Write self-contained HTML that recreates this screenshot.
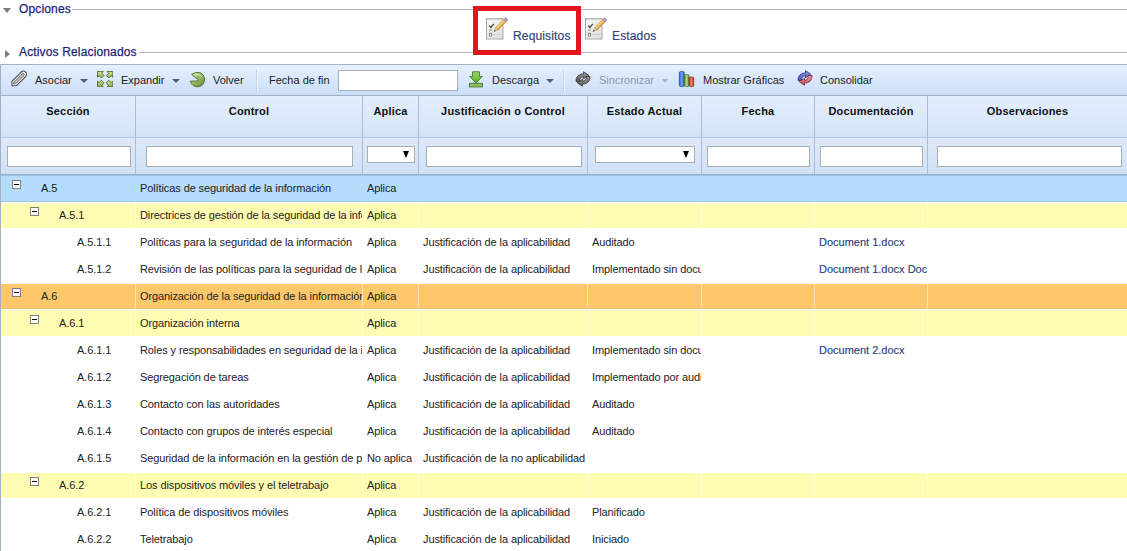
<!DOCTYPE html>
<html><head><meta charset="utf-8">
<style>
*{margin:0;padding:0;box-sizing:border-box}
html,body{width:1127px;height:551px;overflow:hidden;background:#fff;font-family:"Liberation Sans",sans-serif;position:relative}
.abs{position:absolute}
.leg{position:absolute;left:19px;font-size:12px;color:#1c1f76;white-space:nowrap;line-height:14px;letter-spacing:0.15px;-webkit-text-stroke:0.25px #1c1f76}
.hline{position:absolute;height:1px;background:#b5b8c8;right:0}
.tri{position:absolute;width:0;height:0}
.tab{position:absolute;font-size:12px;color:#34447a;line-height:14px;letter-spacing:0.15px;-webkit-text-stroke:0.2px #34447a}
.tb{position:absolute;left:0;top:64px;width:1127px;height:32px;border:1px solid #a3b1c4;border-right:none;background:linear-gradient(#e6f0fd,#cbdff9)}
.tt{position:absolute;top:74px;font-size:11px;color:#222;white-space:nowrap;line-height:13px}
.arr{position:absolute;top:79px;width:0;height:0;border-left:3.5px solid transparent;border-right:3.5px solid transparent;border-top:4px solid #4f5f74}
.sep{position:absolute;top:70px;width:2px;height:21px;background:#c5d3e6;border-right:1px solid #f2f6fb}
.hdr{position:absolute;left:0;top:96px;width:1127px;height:78px;background:linear-gradient(#e3eefc 0px,#d4e4f8 41px,#deeafa 42px,#d0e1f6 78px);border-left:1px solid #a3b1c4}
.hc{position:absolute;top:0;height:42px;font-size:11px;font-weight:bold;color:#111;text-align:center;line-height:13px;padding-top:9px;border-right:1px solid #aabdd4;border-bottom:1px solid #b3c6de;letter-spacing:0.2px}
.fc{position:absolute;top:42px;height:36px;border-right:1px solid #aabdd4}
.inp{position:absolute;top:146px;height:21px;background:#fff;border:1px solid #a9adb4}
.sel{position:absolute;top:146px;height:17px;background:#fff;border:1px solid #a9adb4}
.dd{position:absolute;right:5px;top:4px;width:0;height:0;border-left:3.5px solid transparent;border-right:3.5px solid transparent;border-top:7px solid #000}
.row{position:absolute;left:0;width:1127px;height:27px}
.rb{background:#b3dcfd;border-bottom:1px solid #a6c9ea}
.ro{background:#fdc86c}
.ry{background:#fefdb3}
.rw{background:#fff}
.vl{position:absolute;top:0;bottom:0;width:1px;background:rgba(255,255,255,.5)}
.bg{position:absolute;left:0;right:0}
.t{position:absolute;top:8px;font-size:11px;color:#222;white-space:nowrap;overflow:hidden;line-height:13px;letter-spacing:-0.1px}
.doc{color:#2d3f7e;letter-spacing:0;-webkit-text-stroke:0.15px #2d3f7e}
.mb{position:absolute;top:6px;width:9px;height:9px;border:1px solid #808080;background:#fff}
.mb:after{content:"";position:absolute;left:1px;top:3px;width:5px;height:1px;background:#000}

</style></head><body>
<div class="tri" style="left:3px;top:8px;border-left:4px solid transparent;border-right:4px solid transparent;border-top:5px solid #7a7a7a"></div>
<div class="leg" style="top:2px">Opciones</div>
<div class="hline" style="left:72px;top:9px"></div>
<div class="tri" style="left:5px;top:49.5px;border-top:4px solid transparent;border-bottom:4px solid transparent;border-left:5px solid #7a7a7a"></div>
<div class="leg" style="top:45px">Activos Relacionados</div>
<div class="hline" style="left:139px;top:52px"></div>
<div class="abs" style="left:473px;top:6px;width:108px;height:49px;border:5px solid #e3161f"></div>
<div class="tab" style="left:513px;top:29px">Requisitos</div>
<div class="tab" style="left:612px;top:29px">Estados</div>
<div class="tb"></div>
<div class="tt" style="left:35px">Asociar</div>
<div class="arr" style="left:80px;border-left-width:4px;border-right-width:4px"></div>
<div class="tt" style="left:121px">Expandir</div>
<div class="arr" style="left:172px;border-left-width:4px;border-right-width:4px"></div>
<div class="tt" style="left:213px">Volver</div>
<div class="sep" style="left:256px"></div>
<div class="tt" style="left:269px">Fecha de fin</div>
<div class="abs" style="left:338px;top:70px;width:120px;height:21px;background:#fff;border:1px solid #a9adb4"></div>
<div class="tt" style="left:492px">Descarga</div>
<div class="arr" style="left:546px;border-left-width:4px;border-right-width:4px"></div>
<div class="sep" style="left:563px"></div>
<div class="tt" style="left:599px;color:#8c9aab">Sincronizar</div>
<div class="arr" style="left:662px;border-top-color:#a7b4c3"></div>
<div class="tt" style="left:703px">Mostrar Gráficas</div>
<div class="tt" style="left:820px">Consolidar</div>
<!-- paperclip -->
<svg class="abs" style="left:8px;top:68px" width="22" height="22" viewBox="0 0 22 22">
<g transform="translate(10.8 10.9) rotate(45) scale(0.87)">
<path d="M-3.6 7.6 L-3.6 -7.4 A3.6 3.6 0 0 1 3.6 -7.4 L3.6 7.6 L0 11 Z" fill="#fafafa" stroke="#4a4a4a" stroke-width="1.25" stroke-linejoin="round"/>
<path d="M-1.5 7.6 L-1.5 -6.6 A1.5 1.5 0 0 1 1.5 -6.6 L1.5 6.5 L0 8.3 Z" fill="#b8b8b8" stroke="#6e6e6e" stroke-width="1"/>
</g>
</svg>
<!-- expandir -->
<svg class="abs" style="left:96.8px;top:71px" width="16.3" height="16.3" viewBox="0 0 17 17">
<defs><linearGradient id="gx" x1="0" y1="0" x2="0" y2="1"><stop offset="0" stop-color="#cfe39a"/><stop offset="1" stop-color="#8aa84a"/></linearGradient></defs>
<g fill="url(#gx)" stroke="#4e6628" stroke-width="0.9" stroke-linejoin="round">
<path d="M0.5 0.5 L6.5 0.5 L5 2.3 L7.3 4.6 L4.6 7.3 L2.3 5 L0.5 6.5 Z"/>
<path d="M16.5 0.5 L10.5 0.5 L12 2.3 L9.7 4.6 L12.4 7.3 L14.7 5 L16.5 6.5 Z"/>
<path d="M0.5 16.5 L6.5 16.5 L5 14.7 L7.3 12.4 L4.6 9.7 L2.3 12 L0.5 10.5 Z"/>
<path d="M16.5 16.5 L10.5 16.5 L12 14.7 L9.7 12.4 L12.4 9.7 L14.7 12 L16.5 10.5 Z"/>
</g>
</svg>
<!-- volver -->
<svg class="abs" style="left:189px;top:71px" width="17" height="17" viewBox="0 0 17 17">
<defs><linearGradient id="gv" x1="0" y1="0" x2="1" y2="1"><stop offset="0" stop-color="#cfe6a0"/><stop offset="1" stop-color="#5f8a2c"/></linearGradient></defs>
<path d="M2.6 3.4 Q6.5 0.6 10.8 1.6 Q15.6 3.6 15.5 8.8 Q15 15.2 8.8 15.8 Q3 15.8 1.2 10.2 L7.8 10 Q9.6 9.6 9.2 8.2 L6.4 6.6 Z" fill="url(#gv)" stroke="#4a6a22" stroke-width="0.9" stroke-linejoin="round"/>
<path d="M6 3.2 Q10.5 2.5 13 6" fill="none" stroke="#e8f4d0" stroke-width="0.9" opacity="0.8"/>
</svg>
<!-- descarga -->
<svg class="abs" style="left:468px;top:71px" width="16" height="17" viewBox="0 0 16 17">
<defs><linearGradient id="gd" x1="0" y1="0" x2="0" y2="1"><stop offset="0" stop-color="#9fd86a"/><stop offset="1" stop-color="#4fae22"/></linearGradient></defs>
<path d="M4.5 0.8 L11.5 0.8 L11.5 5.5 L14.3 5.5 L8 12 L1.7 5.5 L4.5 5.5 Z" fill="url(#gd)" stroke="#3f7a22" stroke-width="0.9" stroke-linejoin="round"/>
<rect x="1.5" y="12.3" width="13" height="3.6" fill="#8bc45a" stroke="#4b6e33" stroke-width="0.9"/>
</svg>
<!-- sync gray -->
<svg class="abs" style="left:575px;top:71px" width="16" height="16" viewBox="0 0 16 16">
<defs><linearGradient id="sg" x1="0" y1="0" x2="0" y2="1"><stop offset="0" stop-color="#9a9a9a"/><stop offset="1" stop-color="#5a5a5a"/></linearGradient></defs>
<g fill="url(#sg)" stroke="#333" stroke-width="0.8" stroke-linejoin="round">
<path d="M1 10.5 C0.8 6 3.5 3 8.5 3 L8.5 0.7 L13.8 4.3 L8.5 7.8 L8.5 5.8 C6 5.8 4.3 7.6 4.8 10.5 Z"/>
<path d="M15 5.5 C15.2 10 12.5 13 7.5 13 L7.5 15.3 L2.2 11.7 L7.5 8.2 L7.5 10.2 C10 10.2 11.7 8.4 11.2 5.5 Z"/>
</g>
</svg>
<!-- chart -->
<svg class="abs" style="left:678px;top:70px" width="17" height="18" viewBox="0 0 17 18">
<defs>
<linearGradient id="cb" x1="0" x2="1"><stop offset="0" stop-color="#2c5cc8"/><stop offset=".5" stop-color="#7aa4ec"/><stop offset="1" stop-color="#2a4fa8"/></linearGradient>
<linearGradient id="cg" x1="0" x2="1"><stop offset="0" stop-color="#4f9a2a"/><stop offset=".5" stop-color="#b8e07a"/><stop offset="1" stop-color="#4a8a26"/></linearGradient>
<linearGradient id="cr" x1="0" x2="1"><stop offset="0" stop-color="#c8301e"/><stop offset=".5" stop-color="#f4846a"/><stop offset="1" stop-color="#a8281a"/></linearGradient>
</defs>
<rect x="1.3" y="1.5" width="5" height="15" rx="1.5" fill="url(#cb)" stroke="#24468e" stroke-width="0.7"/>
<rect x="6.5" y="4.5" width="4.4" height="12" rx="1.3" fill="url(#cg)" stroke="#3e7a22" stroke-width="0.7"/>
<rect x="11.1" y="7" width="4.6" height="9.5" rx="1.3" fill="url(#cr)" stroke="#8e2418" stroke-width="0.7"/>
</svg>
<!-- consolidar -->
<svg class="abs" style="left:797px;top:70px" width="16" height="16" viewBox="0 0 16 16">
<defs><linearGradient id="cbg" x1="0" y1="0" x2="0" y2="1"><stop offset="0" stop-color="#8c9ae0"/><stop offset="1" stop-color="#4656b0"/></linearGradient>
<linearGradient id="crg" x1="0" y1="0" x2="0" y2="1"><stop offset="0" stop-color="#f09aa0"/><stop offset="1" stop-color="#c0505a"/></linearGradient></defs>
<path d="M1 10.5 C0.8 6 3.5 3 8.5 3 L8.5 0.7 L13.8 4.3 L8.5 7.8 L8.5 5.8 C6 5.8 4.3 7.6 4.8 10.5 Z" fill="url(#cbg)" stroke="#232e80" stroke-width="0.8" stroke-linejoin="round"/>
<path d="M15 5.5 C15.2 10 12.5 13 7.5 13 L7.5 15.3 L2.2 11.7 L7.5 8.2 L7.5 10.2 C10 10.2 11.7 8.4 11.2 5.5 Z" fill="url(#crg)" stroke="#7a2230" stroke-width="0.8" stroke-linejoin="round"/>
</svg>
<!-- tab icons -->
<svg width="0" height="0" style="position:absolute">
<defs><linearGradient id="pp" x1="0" y1="0" x2="1" y2="1"><stop offset="0" stop-color="#f7f8f7"/><stop offset="1" stop-color="#dde1dd"/></linearGradient>
<linearGradient id="pc" x1="0" y1="0" x2="1" y2="0"><stop offset="0" stop-color="#fbe08e"/><stop offset="1" stop-color="#dc9a38"/></linearGradient>
<symbol id="req" viewBox="0 0 24 24">
<rect x="1.5" y="2.5" width="16.5" height="20.5" fill="url(#pp)" stroke="#a5aaa5" stroke-width="1"/>
<rect x="2" y="2.5" width="15.5" height="1.2" fill="#c5cac5"/>
<path d="M4.2 9.6 L5.9 11.4 L8.8 7.8" fill="none" stroke="#3e4d3a" stroke-width="1.3"/>
<path d="M4.3 13.3 L6.6 13.3 M4.3 14.6 L6.6 14.6" stroke="#8a8f8a" stroke-width="0.7"/>
<rect x="4.3" y="17.2" width="2.4" height="2.8" fill="#fff" stroke="#6f746f" stroke-width="0.8"/>
<path d="M8.5 18.6 L15.5 18.6" stroke="#9ea39e" stroke-width="0.8" stroke-dasharray="1 1"/>
<path d="M10 14 L15.5 14" stroke="#b0b5b0" stroke-width="0.7" stroke-dasharray="1 1"/>
<g transform="translate(15.4 9.2) rotate(45)">
<rect x="-1.7" y="-6.6" width="3.4" height="11.6" fill="url(#pc)" stroke="#b07a2a" stroke-width="0.5"/>
<rect x="-1.7" y="-9.2" width="3.4" height="2.8" rx="0.8" fill="#b6a0c8" stroke="#7e6a8e" stroke-width="0.5"/>
<path d="M-1.7 5 L0 9.2 L1.7 5 Z" fill="#efd9ad" stroke="#8a6d3e" stroke-width="0.4"/>
<path d="M-0.7 7.2 L0 9.2 L0.7 7.2 Z" fill="#3a3a3a"/>
</g>
</symbol></defs></svg>
<svg class="abs" style="left:485px;top:16px" width="24" height="24"><use href="#req"/></svg>
<svg class="abs" style="left:584px;top:16px" width="24" height="24"><use href="#req"/></svg>

<div class="hdr">
<div class="hc" style="left:0px;width:135px">Sección</div><div class="hc" style="left:135px;width:227px">Control</div><div class="hc" style="left:362px;width:56px">Aplica</div><div class="hc" style="left:418px;width:169px">Justificación o Control</div><div class="hc" style="left:587px;width:114px">Estado Actual</div><div class="hc" style="left:701px;width:113px">Fecha</div><div class="hc" style="left:814px;width:113px">Documentación</div><div class="hc" style="left:927px;width:200px">Observaciones</div>
<div class="fc" style="left:0px;width:135px"></div><div class="fc" style="left:135px;width:227px"></div><div class="fc" style="left:362px;width:56px"></div><div class="fc" style="left:418px;width:169px"></div><div class="fc" style="left:587px;width:114px"></div><div class="fc" style="left:701px;width:113px"></div><div class="fc" style="left:814px;width:113px"></div><div class="fc" style="left:927px;width:200px"></div>
</div>
<div class="inp" style="left:7px;width:124px"></div><div class="inp" style="left:146px;width:207px"></div><div class="sel" style="left:367px;width:48px"><span class="dd"></span></div><div class="inp" style="left:426px;width:156px"></div><div class="sel" style="left:595px;width:100px"><span class="dd"></span></div><div class="inp" style="left:707px;width:103px"></div><div class="inp" style="left:820px;width:103px"></div><div class="inp" style="left:937px;width:185px"></div>
<div class="row" style="top:174px"><div class="bg" style="top:1px;height:27px;background:#b3dcfd;border-top:1px solid #9fc0df;border-bottom:1px solid #a3c3e0"></div><div class="mb" style="left:12px"></div><div class="t" style="left:41px;width:94px">A.5</div><div class="t" style="left:140px;width:222px">Políticas de seguridad de la información</div><div class="t" style="left:367px;width:51px">Aplica</div></div><div class="row" style="top:201px"><div class="bg" style="top:1px;height:26px;background:#fefdb3;border-top:2px solid #fcfde4"></div><div class="vl" style="left:135px"></div><div class="vl" style="left:362px"></div><div class="vl" style="left:418px"></div><div class="vl" style="left:587px"></div><div class="vl" style="left:701px"></div><div class="vl" style="left:814px"></div><div class="vl" style="left:927px"></div><div class="mb" style="left:30px"></div><div class="t" style="left:59px;width:76px">A.5.1</div><div class="t" style="left:140px;width:222px">Directrices de gestión de la seguridad de la información</div><div class="t" style="left:367px;width:51px">Aplica</div></div><div class="row" style="top:228px"><div class="t" style="left:77px;width:58px">A.5.1.1</div><div class="t" style="left:140px;width:222px">Políticas para la seguridad de la información</div><div class="t" style="left:367px;width:51px">Aplica</div><div class="t" style="left:423px;width:164px">Justificación de la aplicabilidad</div><div class="t" style="left:592px;width:109px">Auditado</div><div class="t doc" style="left:819px;width:108px">Document 1.docx</div></div><div class="row" style="top:255px"><div class="t" style="left:77px;width:58px">A.5.1.2</div><div class="t" style="left:140px;width:222px">Revisión de las políticas para la seguridad de la información</div><div class="t" style="left:367px;width:51px">Aplica</div><div class="t" style="left:423px;width:164px">Justificación de la aplicabilidad</div><div class="t" style="left:592px;width:109px">Implementado sin documentar</div><div class="t doc" style="left:819px;width:108px">Document 1.docx Document 2.docx</div></div><div class="row" style="top:282px"><div class="bg" style="top:2px;height:25px;background:#fdc86c;border-bottom:1px solid #ebc27a"></div><div class="vl" style="left:135px"></div><div class="vl" style="left:362px"></div><div class="vl" style="left:418px"></div><div class="vl" style="left:587px"></div><div class="vl" style="left:701px"></div><div class="vl" style="left:814px"></div><div class="vl" style="left:927px"></div><div class="mb" style="left:12px"></div><div class="t" style="left:41px;width:94px">A.6</div><div class="t" style="left:140px;width:222px">Organización de la seguridad de la información</div><div class="t" style="left:367px;width:51px">Aplica</div></div><div class="row" style="top:309px"><div class="bg" style="top:0px;height:27px;background:#fefdb3;border-top:2px solid #fefbd6"></div><div class="vl" style="left:135px"></div><div class="vl" style="left:362px"></div><div class="vl" style="left:418px"></div><div class="vl" style="left:587px"></div><div class="vl" style="left:701px"></div><div class="vl" style="left:814px"></div><div class="vl" style="left:927px"></div><div class="mb" style="left:30px"></div><div class="t" style="left:59px;width:76px">A.6.1</div><div class="t" style="left:140px;width:222px">Organización interna</div><div class="t" style="left:367px;width:51px">Aplica</div></div><div class="row" style="top:336px"><div class="t" style="left:77px;width:58px">A.6.1.1</div><div class="t" style="left:140px;width:222px">Roles y responsabilidades en seguridad de la información</div><div class="t" style="left:367px;width:51px">Aplica</div><div class="t" style="left:423px;width:164px">Justificación de la aplicabilidad</div><div class="t" style="left:592px;width:109px">Implementado sin documentar</div><div class="t doc" style="left:819px;width:108px">Document 2.docx</div></div><div class="row" style="top:363px"><div class="t" style="left:77px;width:58px">A.6.1.2</div><div class="t" style="left:140px;width:222px">Segregación de tareas</div><div class="t" style="left:367px;width:51px">Aplica</div><div class="t" style="left:423px;width:164px">Justificación de la aplicabilidad</div><div class="t" style="left:592px;width:109px">Implementado por auditar</div></div><div class="row" style="top:390px"><div class="t" style="left:77px;width:58px">A.6.1.3</div><div class="t" style="left:140px;width:222px">Contacto con las autoridades</div><div class="t" style="left:367px;width:51px">Aplica</div><div class="t" style="left:423px;width:164px">Justificación de la aplicabilidad</div><div class="t" style="left:592px;width:109px">Auditado</div></div><div class="row" style="top:417px"><div class="t" style="left:77px;width:58px">A.6.1.4</div><div class="t" style="left:140px;width:222px">Contacto con grupos de interés especial</div><div class="t" style="left:367px;width:51px">Aplica</div><div class="t" style="left:423px;width:164px">Justificación de la aplicabilidad</div><div class="t" style="left:592px;width:109px">Auditado</div></div><div class="row" style="top:444px"><div class="t" style="left:77px;width:58px">A.6.1.5</div><div class="t" style="left:140px;width:222px">Seguridad de la información en la gestión de proyectos</div><div class="t" style="left:367px;width:51px">No aplica</div><div class="t" style="left:423px;width:164px">Justificación de la no aplicabilidad</div></div><div class="row" style="top:471px"><div class="bg" style="top:2px;height:25px;background:#fefdb3"></div><div class="vl" style="left:135px"></div><div class="vl" style="left:362px"></div><div class="vl" style="left:418px"></div><div class="vl" style="left:587px"></div><div class="vl" style="left:701px"></div><div class="vl" style="left:814px"></div><div class="vl" style="left:927px"></div><div class="mb" style="left:30px"></div><div class="t" style="left:59px;width:76px">A.6.2</div><div class="t" style="left:140px;width:222px">Los dispositivos móviles y el teletrabajo</div><div class="t" style="left:367px;width:51px">Aplica</div></div><div class="row" style="top:498px"><div class="t" style="left:77px;width:58px">A.6.2.1</div><div class="t" style="left:140px;width:222px">Política de dispositivos móviles</div><div class="t" style="left:367px;width:51px">Aplica</div><div class="t" style="left:423px;width:164px">Justificación de la aplicabilidad</div><div class="t" style="left:592px;width:109px">Planificado</div></div><div class="row" style="top:525px"><div class="t" style="left:77px;width:58px">A.6.2.2</div><div class="t" style="left:140px;width:222px">Teletrabajo</div><div class="t" style="left:367px;width:51px">Aplica</div><div class="t" style="left:423px;width:164px">Justificación de la aplicabilidad</div><div class="t" style="left:592px;width:109px">Iniciado</div></div>
<div class="abs" style="left:0;top:174px;width:1127px;height:1px;background:#8fb3d6"></div>
<div class="abs" style="left:0;top:174px;width:1px;height:377px;background:#a3b1c4"></div>
</body></html>
